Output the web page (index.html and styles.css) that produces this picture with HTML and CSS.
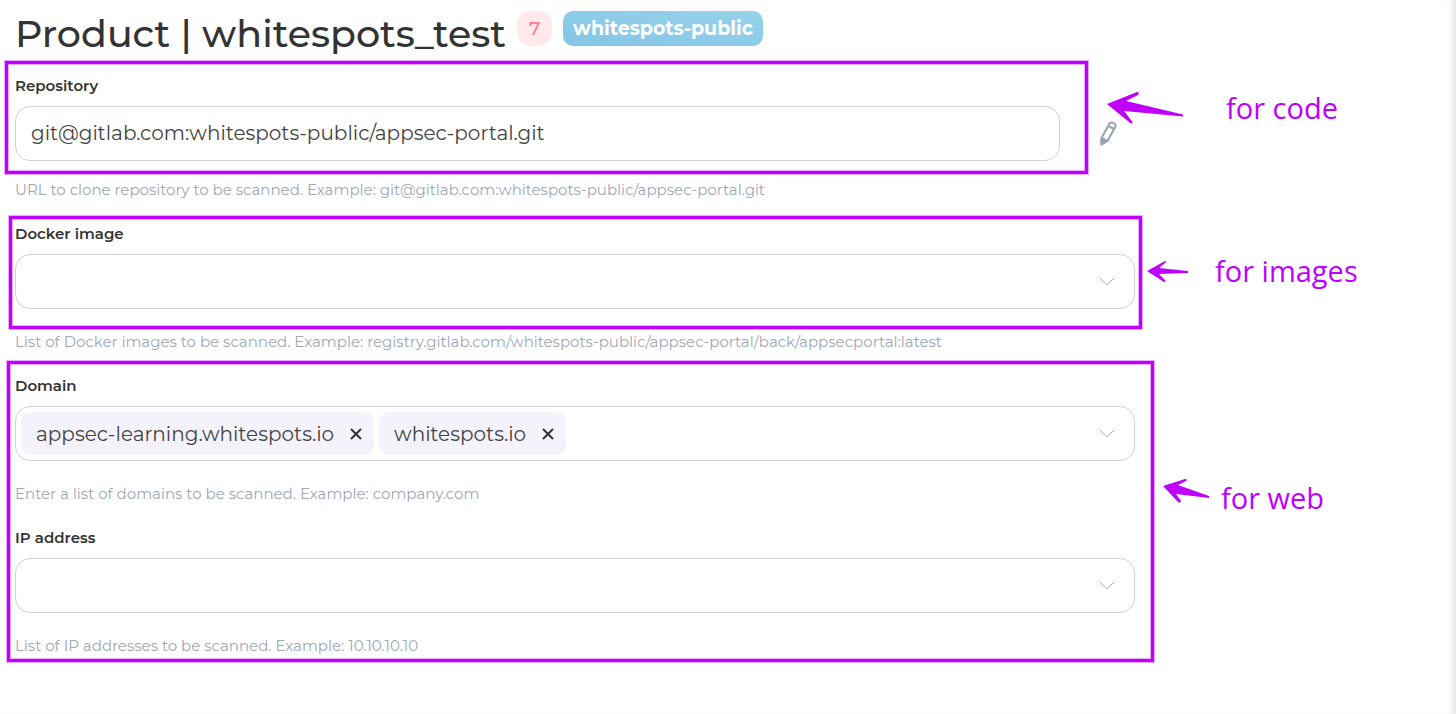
FILE: index.html
```
<!DOCTYPE html>
<html lang="en">
<head>
<meta charset="utf-8">
<meta name="viewport" content="width=device-width, initial-scale=1">
<title>Product | whitespots_test</title>
<link rel="stylesheet" href="styles.css">
</head>
<body>
<main class="page">
  <header class="header">
    <h1 class="title">Product | whitespots_test</h1>
    <span class="count">7</span>
    <span class="tag">whitespots-public</span>
  </header>

  <form class="form">
    <section class="group">
      <div class="marked marked-code">
        <label class="label" for="repo">Repository</label>
        <div class="row">
          <input class="control" id="repo" type="text" value="git@gitlab.com:whitespots-public/appsec-portal.git">
          <button class="edit" type="button" aria-label="Edit repository">
            <svg width="18" height="26" viewBox="0 0 18 26" fill="none" stroke="#9ca3af" stroke-width="2" stroke-linejoin="round"><path d="M1.500 17 9.500 2.500Q11 .8 13.500 2T15.500 5.500L7.500 20 1.500 23.500Z"/><path d="M8.500 5 14 8M1.500 17l6 3"/><path d="M1.500 18.500 6 20.500 1.500 23.500Z" fill="#9ca3af"/></svg>
          </button>
        </div>
        <div class="frame"></div>
        <svg class="arrow" width="78" height="34" viewBox="0 0 78 34"><path d="M0 13 30 1Q33 1 31 4L19 10 76 23.500V25.500L17 20 25.500 31Q25 34 22 31Z"/></svg>
        <span class="note">for code</span>
      </div>
      <p class="hint">URL to clone repository to be scanned. Example: git@gitlab.com:whitespots-public/appsec-portal.git</p>
    </section>

    <section class="group">
      <div class="marked marked-images">
        <label class="label" for="docker">Docker image</label>
        <div class="picker">
          <select class="control" id="docker"><option></option></select>
          <svg class="chevron" width="16" height="10" viewBox="0 0 16 10"><path d="M1 1l7 7 7-7"/></svg>
        </div>
        <div class="frame"></div>
        <svg class="arrow" width="42" height="24" viewBox="0 0 42 24"><path d="M0 11 18 1Q20 1 18 3L12 8 41 11V13L12 14 18 20Q19 23 17 22Z"/></svg>
        <span class="note">for images</span>
      </div>
      <p class="hint">List of Docker images to be scanned. Example: registry.gitlab.com/whitespots-public/appsec-portal/back/appsecportal:latest</p>
    </section>

    <div class="marked marked-web">
      <section class="group">
        <label class="label" for="domain">Domain</label>
        <div class="control chips">
          <span class="chip">appsec-learning.whitespots.io
            <button class="remove" type="button" aria-label="Remove appsec-learning.whitespots.io"><svg width="12" height="12" viewBox="0 0 12 12"><path d="M1 1l10 10M11 1 1 11"/></svg></button>
          </span>
          <span class="chip">whitespots.io
            <button class="remove" type="button" aria-label="Remove whitespots.io"><svg width="12" height="12" viewBox="0 0 12 12"><path d="M1 1l10 10M11 1 1 11"/></svg></button>
          </span>
          <input class="entry" id="domain" type="text">
          <svg class="chevron" width="16" height="10" viewBox="0 0 16 10"><path d="M1 1l7 7 7-7"/></svg>
        </div>
        <p class="hint">Enter a list of domains to be scanned. Example: company.com</p>
      </section>
      <section class="group">
        <label class="label" for="ip">IP address</label>
        <div class="picker">
          <select class="control" id="ip"><option></option></select>
          <svg class="chevron" width="16" height="10" viewBox="0 0 16 10"><path d="M1 1l7 7 7-7"/></svg>
        </div>
        <p class="hint">List of IP addresses to be scanned. Example: 10.10.10.10</p>
      </section>
      <div class="frame"></div>
      <svg class="arrow" width="48" height="26" viewBox="0 0 48 26"><path d="M0 8 22 1Q25 1 23 3L15 7 46 18V20L13 16 18 23Q17 26 15 24Z"/></svg>
      <span class="note">for web</span>
    </div>
  </form>
</main>
</body>
</html>
```
FILE: styles.css
```
* { box-sizing: border-box; }

body {
  margin: 0;
  background: #fff;
  color: #333;
  font-family: Montserrat, Inter, sans-serif;
}

.page {
  min-height: 100vh;
  padding: 11px 321px 24px 15px;
  box-shadow: inset -8px 0 8px -6px #ddd;
}

.header {
  display: flex;
  align-items: flex-start;
  gap: 11px;
  height: 65px;
  white-space: nowrap;
}

.title {
  margin: 0;
  font-size: 38px;
  line-height: 46px;
  font-weight: 500;
}

.count, .tag {
  height: 35px;
  line-height: 35px;
  font-size: 19px;
}

.count {
  width: 35px;
  border-radius: 14px;
  background: #ffe9eb;
  color: #ff7b8b;
  font-weight: 500;
  text-align: center;
}

.tag {
  padding: 0 10px;
  border-radius: 10px;
  background: linear-gradient(to top right, #84c5e6, #96d3ea);
  color: #fff;
  font-weight: 700;
}

.form, .marked-web {
  display: flex;
  flex-direction: column;
  gap: 24px;
}

.marked { position: relative; }

.label {
  display: block;
  margin-bottom: 10px;
  font-size: 15px;
  line-height: 20px;
  font-weight: 600;
}

.row { display: flex; align-items: center; gap: 40px; }

.control {
  display: block;
  width: 100%;
  height: 55px;
  padding: 0 15px 2px;
  border: 1px solid #d1d1db;
  border-radius: 15px;
  background: #fff;
  color: #444;
  font-family: inherit;
  font-size: 20px;
  font-weight: 400;
  appearance: none;
}

.row .control { flex: 1; min-width: 0; }

.edit {
  display: flex;
  width: 35px;
  padding: 0;
  border: 0;
  background: none;
}

.picker { position: relative; }

.chevron {
  flex: none;
  fill: none;
  stroke: #b4b4c0;
}

.picker .chevron { position: absolute; top: 23px; right: 20px; }

.chips {
  display: flex;
  align-items: center;
  gap: 5px;
  padding: 0 19px 0 5px;
}

.chip {
  display: flex;
  align-items: center;
  gap: 16px;
  height: 43px;
  padding: 0 12px 0 15px;
  border-radius: 10px;
  background: #f4f2fb;
  white-space: nowrap;
}

.remove {
  display: flex;
  padding: 0;
  border: 0;
  background: none;
  stroke: #333;
  stroke-width: 2;
}

.entry {
  flex: 1;
  min-width: 0;
  border: 0;
  outline: 0;
  font: inherit;
}

.hint {
  margin: 23px 0 0;
  color: #a0a7b5;
  font-size: 15px;
  line-height: 20px;
}

.marked-code + .hint { margin-top: 19px; }

/* Annotations drawn over the form */
.frame {
  position: absolute;
  border: 3px solid #bf00ff;
  box-shadow: 0 0 0 1px #bf00ff55, inset 0 0 0 1px #bf00ff55;
  pointer-events: none;
}

.arrow, .note { position: absolute; left: 100%; }

.arrow { fill: #bf00ff; }

.note {
  color: #bf00ff;
  font-family: "Segoe UI", "Open Sans", sans-serif;
  font-size: 29px;
  line-height: 40px;
  white-space: nowrap;
}

.marked-code .frame { inset: -15px 47px -13px -10px; }
.marked-code .arrow { top: 15px; margin-left: -28px; }
.marked-code .note { top: 12px; margin-left: 91px; }

.marked-images .frame { inset: -8px -7px -20px -6px; }
.marked-images .arrow { top: 36px; margin-left: 12px; }
.marked-images .note { top: 27px; margin-left: 80px; }

.marked-web .frame { inset: -15px -19px -6px -8px; }
.marked-web .arrow { top: 102px; margin-left: 28px; }
.marked-web .note { top: 102px; margin-left: 86px; }
```
